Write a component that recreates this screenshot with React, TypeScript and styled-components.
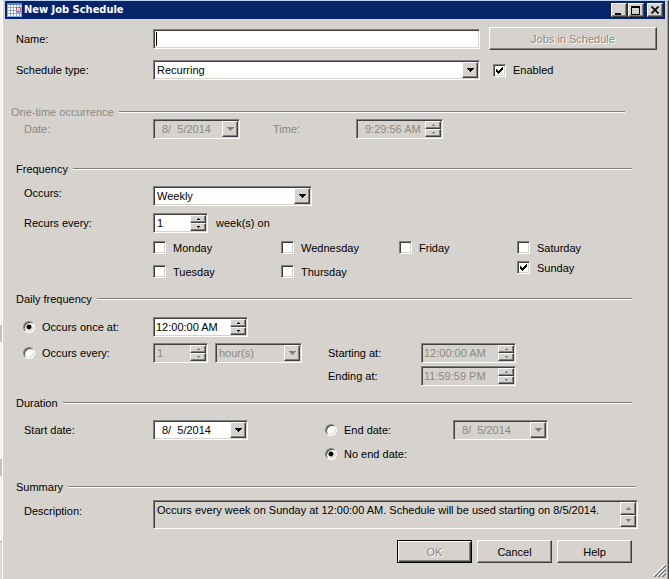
import React, { useState } from "react";
import styled, { createGlobalStyle, css } from "styled-components";

const FACE = "#d6d3ce";
const DIM = "#8b8883";
const SHADE = "#808080";
const DARK = "#404040";

const Global = createGlobalStyle`
  * { box-sizing: border-box; }
  body { margin: 0; background: ${FACE}; }
  body, button, input, select, textarea {
    font: 11px/14px "Liberation Sans", Arial, sans-serif;
    color: #000;
  }
`;

const raised = css`
  border: 1px solid;
  border-color: #fff ${DARK} ${DARK} #fff;
  box-shadow: inset -1px -1px ${SHADE};
  background: ${FACE};
`;

const sunken = css`
  border: 1px solid;
  border-color: ${SHADE} #fff #fff ${SHADE};
  box-shadow: inset 1px 1px ${DARK}, inset -1px -1px ${FACE};
`;

const Screen = styled.div`
  display: flex;
  min-height: 100vh;
`;

const Behind = styled.div`
  width: 2px;
  background: linear-gradient(#f4f3ee 325px, #c4c1bd 325px 342px, #f4f3ee 342px 459px, #c4c1bd 459px 476px, #f4f3ee 476px 541px, #a5a29d 541px 542px, #dedbd6 542px);
`;

const Dialog = styled.main`
  flex: 1;
  min-width: 0;
  border-left: 1px solid #fff;
  border-right: 1px solid ${DARK};
  border-top: 1px solid #b9d0ee;
  box-shadow: inset -1px 0 #a3a09b;
  background: ${FACE};
`;

const TitleBar = styled.header`
  display: flex;
  align-items: center;
  gap: 1px;
  height: 18px;
  margin: 0 3px 0 2px;
  padding: 0 2px;
  background: #07246a;
`;

const Title = styled.h1`
  flex: 1;
  margin: 0;
  font: bold 11px/16px "DejaVu Sans Condensed", "DejaVu Sans", sans-serif;
  color: #fff;
`;

const CaptionButton = styled.button<{ $apart?: boolean }>`
  ${raised}
  display: grid;
  place-items: center;
  width: 16px;
  height: 14px;
  padding: 0;
  margin-left: ${(p) => (p.$apart ? 2 : 0)}px;
`;

const Form = styled.form`
  padding: 8px 11px 0 13px;
`;

const Row = styled.div<{ $top?: number; $align?: string }>`
  display: flex;
  align-items: ${(p) => p.$align || "center"};
  margin-top: ${(p) => p.$top || 0}px;
`;

const Lead = styled.label<{ $indent?: boolean; $dim?: boolean }>`
  flex: none;
  width: 137px;
  padding-left: ${(p) => (p.$indent ? 8 : 0)}px;
  color: ${(p) => (p.$dim ? DIM : "#000")};
`;

const MemoLead = styled(Lead)`
  padding-top: 4px;
`;

const Caption = styled.label<{ $width: number; $dim?: boolean }>`
  flex: none;
  width: ${(p) => p.$width}px;
  color: ${(p) => (p.$dim ? DIM : "#000")};
`;

const Space = styled.span<{ $width: number }>`
  flex: none;
  width: ${(p) => p.$width}px;
`;

const Side = styled.div`
  flex: none;
  width: 177px;
  padding-left: 9px;
`;

const Heading = styled.h2<{ $top: number; $end: number; $dim?: boolean; $out?: boolean }>`
  display: flex;
  align-items: center;
  gap: 5px;
  margin: ${(p) => p.$top}px ${(p) => p.$end}px 0 ${(p) => (p.$out ? -5 : 0)}px;
  font: inherit;
  color: ${(p) => (p.$dim ? DIM : "#000")};
  &::after {
    content: "";
    flex: 1;
    border-top: 1px solid ${SHADE};
    border-bottom: 1px solid #fff;
  }
`;

const Well = styled.div<{ $width?: number; $off?: boolean }>`
  ${sunken}
  display: flex;
  flex: ${(p) => (p.$width ? "none" : 1)};
  width: ${(p) => (p.$width ? p.$width + "px" : "auto")};
  min-width: 0;
  height: 20px;
  padding: 1px;
  background: ${(p) => (p.$off ? FACE : "#fff")};
`;

const SelectWell = styled(Well)`
  display: grid;
  grid-template-columns: 1fr 16px;
`;

const Text = styled.input<{ $pad?: number }>`
  flex: 1;
  min-width: 0;
  border: 0;
  outline: 0;
  padding: 0 0 0 ${(p) => p.$pad || 0}px;
  background: transparent;
  caret-color: transparent;
  &:disabled { color: ${DIM}; }
`;

const Caret = styled.span`
  width: 1px;
  margin: 1px 0 1px 1px;
  background: #000;
`;

const Choice = styled.select`
  grid-area: 1 / 1 / 2 / 3;
  appearance: none;
  border: 0;
  outline: 0;
  padding: 0 18px 0 2px;
  background: transparent;
  &:disabled { color: ${DIM}; opacity: 1; }
`;

const DropMark = styled.span`
  ${raised}
  grid-area: 1 / 2;
  display: grid;
  place-items: center;
  pointer-events: none;
`;

const DropButton = styled.button`
  ${raised}
  display: grid;
  place-items: center;
  flex: none;
  width: 16px;
  padding: 0;
`;

const Steps = styled.span`
  display: grid;
  grid-template-rows: 1fr 1fr;
  flex: none;
  width: 16px;
`;

const Step = styled.button`
  ${raised}
  display: grid;
  place-items: center;
  min-height: 0;
  padding: 0;
`;

const Option = styled.label`
  display: flex;
  align-items: center;
  gap: 7px;
  height: 13px;
  white-space: nowrap;
`;

const TickFrame = styled.span`
  display: grid;
  flex: none;
  width: 13px;
  height: 13px;
  & > * { grid-area: 1 / 1; place-self: center; }
  & > svg { visibility: hidden; pointer-events: none; }
  & > input:checked + svg { visibility: visible; }
`;

const TickInput = styled.input`
  ${sunken}
  appearance: none;
  width: 13px;
  height: 13px;
  margin: 0;
  background: #fff;
`;

const Radio = styled.input`
  ${sunken}
  appearance: none;
  flex: none;
  width: 12px;
  height: 12px;
  margin: 0;
  border-radius: 50%;
  background: #fff;
  &:checked { background: radial-gradient(circle, #000 2px, #fff 3px); }
`;

const RadioLead = styled.div`
  flex: none;
  width: 137px;
  padding-left: 7px;
`;

const Days = styled.div`
  display: grid;
  grid-template-columns: 128px 118px 118px auto;
  justify-content: start;
  margin: 8px 0 0 137px;
`;

const DayColumn = styled.div<{ $gap: number }>`
  display: flex;
  flex-direction: column;
  gap: ${(p) => p.$gap}px;
`;

const Push = styled.button<{ $wide?: boolean; $main?: boolean }>`
  ${raised}
  flex: none;
  width: ${(p) => (p.$wide ? 168 : 75)}px;
  height: 23px;
  padding: 0;
  ${(p) => p.$main && css`
    border-color: #000;
    box-shadow: inset 1px 1px #fff, inset -1px -1px ${DARK}, inset -2px -2px ${SHADE};
  `}
  &:disabled { color: ${DIM}; text-shadow: 1px 1px #fff; }
`;

const Memo = styled.div`
  ${sunken}
  display: flex;
  flex: 1;
  height: 29px;
  margin-right: 19px;
  padding: 1px;
`;

const MemoText = styled.textarea`
  flex: 1;
  border: 0;
  outline: 0;
  resize: none;
  overflow: hidden;
  padding: 1px 0 0 2px;
  background: transparent;
`;

const Footer = styled.footer`
  display: flex;
  justify-content: flex-end;
  gap: 5px;
  margin: 11px 25px 0 0;
`;

const Corner = styled.div`
  display: flex;
  justify-content: flex-end;
  padding: 1px 2px 0 0;
`;

const Arrow = ({ up, small, off }: { up?: boolean; small?: boolean; off?: boolean }) => {
  const w = small ? 3 : 7;
  const h = small ? 2 : 4;
  return (
    <svg width={w} height={h} viewBox={`0 0 ${w} ${h}`} shapeRendering="crispEdges">
      <path d={up ? `M0 ${h}H${w}L${w / 2} 0Z` : `M0 0H${w}L${w / 2} ${h}Z`} fill={off ? SHADE : "#000"} />
    </svg>
  );
};

const CalendarIcon = () => (
  <svg width="16" height="16" viewBox="0 0 16 16" shapeRendering="crispEdges">
    <path d="M0 1H15V15H0Z" fill="#8aa9dc" />
    <path d="M0 1H15V3H0Z" fill="#5d86c8" />
    <path d="M1 3h2v2h-2zM4 3h2v2h-2zM7 3h2v2h-2zM10 3h2v2h-2zM13 3h1v2h-1zM1 6h2v2h-2zM4 6h2v2h-2zM7 6h2v2h-2zM1 9h2v2h-2zM4 9h2v2h-2zM7 9h2v2h-2zM10 12h2v2h-2zM1 12h2v2h-2zM4 12h2v2h-2zM7 12h2v2h-2zM13 12h1v2h-1z" fill="#fff" />
    <path d="M9.5 5.5h4v4h-4z" fill="#f6d9dc" stroke="#d0616c" />
    <path d="M11 7h1v1h-1z" fill="#d0616c" />
  </svg>
);

const Check = ({ label, on }: { label: string; on?: boolean }) => (
  <Option>
    <TickFrame>
      <TickInput type="checkbox" defaultChecked={on} />
      <svg width="7" height="7" viewBox="0 0 7 7" shapeRendering="crispEdges">
        <path d="M0 2h1v1h1v1h1v-1h1v-1h1v-1h1v-1h1v3h-1v1h-1v1h-1v1h-1v1h-1v-1h-1v-1h-1z" />
      </svg>
    </TickFrame>
    {label}
  </Option>
);

const Select = ({ id, value, width, off, label }: { id: string; value: string; width?: number; off?: boolean; label?: string }) => (
  <SelectWell $width={width} $off={off}>
    <Choice id={id} aria-label={label} disabled={off}><option>{value}</option></Choice>
    <DropMark><Arrow off={off} /></DropMark>
  </SelectWell>
);

const DateField = ({ id, width, off, label }: { id: string; width: number; off?: boolean; label?: string }) => (
  <Well $width={width} $off={off}>
    <Text id={id} aria-label={label} $pad={7} defaultValue="8/  5/2014" disabled={off} />
    <DropButton type="button" aria-label="Open calendar" disabled={off}><Arrow off={off} /></DropButton>
  </Well>
);

const Spin = ({ id, value, width, off, pad = 1, label }: { id: string; value: string; width: number; off?: boolean; pad?: number; label?: string }) => (
  <Well $width={width} $off={off}>
    <Text id={id} aria-label={label} $pad={pad} defaultValue={value} disabled={off} />
    <Steps>
      <Step type="button" aria-label="Increase" disabled={off}><Arrow up small off={off} /></Step>
      <Step type="button" aria-label="Decrease" disabled={off}><Arrow small off={off} /></Step>
    </Steps>
  </Well>
);

export default function App() {
  const [name, setName] = useState("");
  return (
    <Screen>
      <Global />
      <Behind />
      <Dialog>
        <TitleBar>
          <CalendarIcon />
          <Title>New Job Schedule</Title>
          <CaptionButton aria-label="Minimize">
            <svg width="10" height="9" viewBox="0 0 10 9" shapeRendering="crispEdges"><path d="M1 7h6v2h-6z" /></svg>
          </CaptionButton>
          <CaptionButton aria-label="Maximize">
            <svg width="10" height="9" viewBox="0 0 10 9" shapeRendering="crispEdges"><path d="M0 0h9v9h-9zM1 2v6h7v-6z" fillRule="evenodd" /></svg>
          </CaptionButton>
          <CaptionButton aria-label="Close" $apart>
            <svg width="8" height="8" viewBox="0 0 8 8"><path d="M0.5 0.5L7.5 7.5M7.5 0.5L0.5 7.5" stroke="#000" strokeWidth="1.6" /></svg>
          </CaptionButton>
        </TitleBar>
        <Form onSubmit={(e) => e.preventDefault()}>
          <Row>
            <Lead htmlFor="name">Name:</Lead>
            <Well>
              <Caret />
              <Text id="name" value={name} onChange={(e) => setName(e.target.value)} />
            </Well>
            <Side><Push type="button" $wide disabled>Jobs in Schedule</Push></Side>
          </Row>
          <Row $top={10}>
            <Lead htmlFor="type">Schedule type:</Lead>
            <Select id="type" value="Recurring" />
            <Space $width={13} />
            <Caption as="div" $width={164}><Check label="Enabled" on /></Caption>
          </Row>

          <Heading $top={25} $end={32} $dim $out>One-time occurrence</Heading>
          <Row>
            <Lead htmlFor="once-date" $indent $dim>Date:</Lead>
            <DateField id="once-date" width={87} off />
            <Space $width={33} />
            <Caption htmlFor="once-time" $width={83} $dim>Time:</Caption>
            <Spin id="once-time" value="9:29:56 AM" width={87} pad={7} off />
          </Row>

          <Heading $top={23} $end={25}>Frequency</Heading>
          <Row $top={10} $align="flex-start">
            <Lead htmlFor="occurs" $indent>Occurs:</Lead>
            <Select id="occurs" value="Weekly" width={159} />
          </Row>
          <Row $top={7}>
            <Lead htmlFor="recurs" $indent>Recurs every:</Lead>
            <Spin id="recurs" value="1" width={55} pad={2} />
            <Space $width={8} />
            <span>week(s) on</span>
          </Row>
          <Days>
            <DayColumn $gap={11}><Check label="Monday" /><Check label="Tuesday" /></DayColumn>
            <DayColumn $gap={11}><Check label="Wednesday" /><Check label="Thursday" /></DayColumn>
            <DayColumn $gap={11}><Check label="Friday" /></DayColumn>
            <DayColumn $gap={7}><Check label="Saturday" /><Check label="Sunday" on /></DayColumn>
          </Days>

          <Heading $top={14} $end={25}>Daily frequency</Heading>
          <Row $top={11}>
            <RadioLead><Option><Radio type="radio" name="daily" defaultChecked />Occurs once at:</Option></RadioLead>
            <Spin id="once-at" label="Occurs once at" value="12:00:00 AM" width={95} />
          </Row>
          <Row $top={6}>
            <RadioLead><Option><Radio type="radio" name="daily" />Occurs every:</Option></RadioLead>
            <Spin id="every" label="Occurs every" value="1" width={55} pad={2} off />
            <Space $width={7} />
            <Select id="unit" label="Unit" value="hour(s)" width={87} off />
            <Space $width={26} />
            <Caption htmlFor="start-at" $width={93}>Starting at:</Caption>
            <Spin id="start-at" value="12:00:00 AM" width={95} off />
          </Row>
          <Row $top={3}>
            <Space $width={312} />
            <Caption htmlFor="end-at" $width={93}>Ending at:</Caption>
            <Spin id="end-at" value="11:59:59 PM" width={95} off />
          </Row>

          <Heading $top={10} $end={25}>Duration</Heading>
          <Row $top={10}>
            <Lead htmlFor="start-date" $indent>Start date:</Lead>
            <DateField id="start-date" width={95} />
            <Space $width={77} />
            <Caption as="div" $width={128}><Option><Radio type="radio" name="end" />End date:</Option></Caption>
            <DateField id="end-date" label="End date" width={95} off />
          </Row>
          <Row $top={7}>
            <Space $width={309} />
            <Option><Radio type="radio" name="end" defaultChecked />No end date:</Option>
          </Row>

          <Heading $top={20} $end={21}>Summary</Heading>
          <Row $top={6} $align="stretch">
            <MemoLead htmlFor="summary" $indent>Description:</MemoLead>
            <Memo>
              <MemoText id="summary" readOnly rows={1} value="Occurs every week on Sunday at 12:00:00 AM. Schedule will be used starting on 8/5/2014." />
              <Steps>
                <Step type="button" aria-label="Scroll up" disabled><svg width="5" height="3" viewBox="0 0 5 3" shapeRendering="crispEdges"><path d="M0 3H5L2.5 0Z" fill={SHADE} /></svg></Step>
                <Step type="button" aria-label="Scroll down" disabled><svg width="5" height="3" viewBox="0 0 5 3" shapeRendering="crispEdges"><path d="M0 0H5L2.5 3Z" fill={SHADE} /></svg></Step>
              </Steps>
            </Memo>
          </Row>
          <Footer>
            <Push type="submit" $main disabled>OK</Push>
            <Push type="button">Cancel</Push>
            <Push type="button">Help</Push>
          </Footer>
        </Form>
        <Corner>
          <svg width="13" height="13" viewBox="0 0 13 13">
            <path d="M0 12L12 0M4 12L12 4M8 12L12 8" stroke="#fff" />
            <path d="M1 13L13 1M2 13L13 2M5 13L13 5M6 13L13 6M9 13L13 9M10 13L13 10" stroke={SHADE} />
          </svg>
        </Corner>
      </Dialog>
    </Screen>
  );
}
